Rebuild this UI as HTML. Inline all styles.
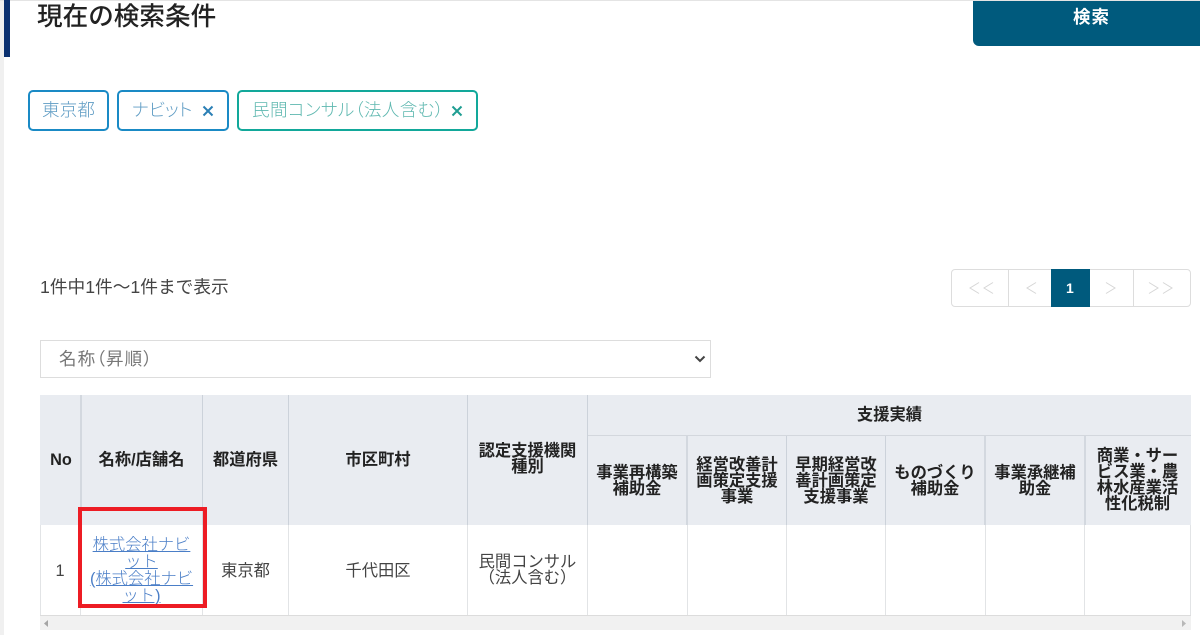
<!DOCTYPE html>
<html lang="ja">
<head>
<meta charset="utf-8">
<style>
html,body{margin:0;padding:0;background:#fff}
body{position:relative;width:1200px;height:635px;overflow:hidden;font-family:"Liberation Sans","Noto Sans CJK JP",sans-serif;color:#333}
.a{position:absolute;box-sizing:border-box}
.t{position:absolute;white-space:nowrap;line-height:1}
.tag{position:absolute;box-sizing:border-box;top:90px;height:41px;border:2px solid #1a8ac5;border-radius:5px;background:#fff}
.tag span{position:absolute;top:8px;white-space:nowrap;font-size:17.6px;line-height:20px;font-weight:300;color:#5f9cc4}
.tag svg{position:absolute;top:13px}
.c{position:absolute;display:flex;align-items:center;justify-content:center;text-align:center;box-sizing:border-box}
.h{font-size:16.3px;line-height:16px;font-weight:700;color:#222}
.d{font-size:16.3px;line-height:16px;color:#444;padding-top:2px}
.v{position:absolute;width:1px}
.p{font-feature-settings:"palt"}
</style>
</head>
<body>
<div class="a" style="left:0;top:0;width:4px;height:635px;background:#f0f0f0"></div>
<div class="a" style="left:0;top:0;width:1200px;height:1px;background:#e4e4e4"></div>
<div class="a" style="left:4px;top:0;width:6px;height:57px;background:#0b3170"></div>
<div class="t" style="left:37px;top:4px;font-size:25.6px;line-height:26px;font-weight:500;color:#222">現在の検索条件</div>

<div class="a" style="left:973px;top:1px;width:227px;height:45px;background:#005a7d;border-bottom-left-radius:6px"></div>
<div class="t" style="left:1073px;top:8px;font-size:17.5px;line-height:18px;font-weight:700;color:#fff;letter-spacing:1px">検索</div>

<div class="tag" style="left:28px;width:81px"><span style="left:12px">東京都</span></div>
<div class="tag" style="left:117px;width:112px"><span class="p" style="left:13px">ナビット</span>
<svg style="left:83px" width="12" height="12" viewBox="0 0 12 12"><path d="M1.5 1.5L10.5 10.5M10.5 1.5L1.5 10.5" stroke="#2b7fb5" stroke-width="2" fill="none"/></svg></div>
<div class="tag" style="left:237px;width:241px;border-color:#12a89a"><span class="p" style="left:13px;color:#5fb8b0;letter-spacing:.35px">民間コンサル（法人含む）</span>
<svg style="left:212px" width="12" height="12" viewBox="0 0 12 12"><path d="M1.5 1.5L10.5 10.5M10.5 1.5L1.5 10.5" stroke="#1f9d92" stroke-width="2" fill="none"/></svg></div>

<div class="t" style="left:40px;top:277px;font-size:17.7px;line-height:20px;color:#444">1件中1件～1件まで表示</div>

<div class="a" style="left:951px;top:269px;width:240px;height:38px;border:1px solid #ddd;border-radius:4px"></div>
<div class="v" style="left:1008px;top:269px;height:38px;background:#ddd"></div>
<div class="a" style="left:1051px;top:269px;width:39px;height:38px;background:#005a7d"></div>
<div class="v" style="left:1133px;top:269px;height:38px;background:#ddd"></div>
<svg class="a" style="left:969px;top:282px" width="25" height="12" viewBox="0 0 25 12"><path d="M10 .5L1 6L10 11.500M24 .5L15 6L24 11.500" stroke="#d6d6d6" stroke-width="1" fill="none"/></svg>
<svg class="a" style="left:1026px;top:282px" width="12" height="12" viewBox="0 0 12 12"><path d="M10 .5L1 6L10 11.500" stroke="#d6d6d6" stroke-width="1" fill="none"/></svg>
<div class="t" style="left:1066px;top:281px;font-size:14px;line-height:14px;color:#fff;font-weight:700">1</div>
<svg class="a" style="left:1105px;top:282px" width="12" height="12" viewBox="0 0 12 12"><path d="M1 .5L10 6L1 11.500" stroke="#d6d6d6" stroke-width="1" fill="none"/></svg>
<svg class="a" style="left:1148px;top:282px" width="25" height="12" viewBox="0 0 25 12"><path d="M1 .5L10 6L1 11.500M15 .5L24 6L15 11.500" stroke="#d6d6d6" stroke-width="1" fill="none"/></svg>

<div class="a" style="left:40px;top:340px;width:671px;height:38px;border:1px solid #ddd;background:#fff"></div>
<div class="t p" style="left:59px;top:349px;font-size:17.5px;line-height:20px;color:#777;letter-spacing:1.1px">名称（昇順）</div>
<svg class="a" style="left:694px;top:355px" width="12" height="8" viewBox="0 0 12 8"><path d="M1.5 1.5L6 6L10.500 1.500" stroke="#444" stroke-width="2" fill="none"/></svg>

<!-- table -->
<div class="a" style="left:40px;top:395px;width:1151px;height:130px;background:#e9ecf1"></div>
<div class="a" style="left:587px;top:435px;width:604px;height:1px;background:#d3d7dd"></div>
<div class="a" style="left:40px;top:525px;width:1px;height:90px;background:#e2e4e6"></div>
<div class="a" style="left:1190px;top:525px;width:1px;height:90px;background:#e2e4e6"></div>
<div class="a" style="left:40px;top:615px;width:1151px;height:1px;background:#dcdcdc"></div>
<div class="a" style="left:40px;top:616px;width:1151px;height:14px;background:#f1f1f1"></div>
<svg class="a" style="left:44px;top:620px" width="5" height="7" viewBox="0 0 5 7"><path d="M4 0V7L0 3.500Z" fill="#a5a5a5"/></svg>
<svg class="a" style="left:1182px;top:620px" width="5" height="7" viewBox="0 0 5 7"><path d="M0 0V7L4 3.500Z" fill="#b8b8b8"/></svg>

<div class="v" style="left:80px;top:395px;height:130px;background:#d3d8df;width:2px"></div>
<div class="v" style="left:202px;top:395px;height:130px;background:#ccd2da"></div>
<div class="v" style="left:288px;top:395px;height:130px;background:#ccd2da"></div>
<div class="v" style="left:467px;top:395px;height:130px;background:#ccd2da"></div>
<div class="v" style="left:587px;top:395px;height:130px;background:#ccd2da"></div>
<div class="v" style="left:686px;top:436px;height:89px;background:#d3d8df;width:2px"></div>
<div class="v" style="left:786px;top:436px;height:89px;background:#ccd2da"></div>
<div class="v" style="left:885px;top:436px;height:89px;background:#ccd2da"></div>
<div class="v" style="left:984px;top:436px;height:89px;background:#d3d8df;width:2px"></div>
<div class="v" style="left:1084px;top:436px;height:89px;background:#d3d8df;width:2px"></div>

<div class="v" style="left:80px;top:525px;height:90px;background:#e2e4e6"></div>
<div class="v" style="left:202px;top:525px;height:90px;background:#e2e4e6"></div>
<div class="v" style="left:288px;top:525px;height:90px;background:#e2e4e6"></div>
<div class="v" style="left:467px;top:525px;height:90px;background:#e2e4e6"></div>
<div class="v" style="left:587px;top:525px;height:90px;background:#e2e4e6"></div>
<div class="v" style="left:687px;top:525px;height:90px;background:#e2e4e6"></div>
<div class="v" style="left:786px;top:525px;height:90px;background:#e2e4e6"></div>
<div class="v" style="left:885px;top:525px;height:90px;background:#e2e4e6"></div>
<div class="v" style="left:985px;top:525px;height:90px;background:#e2e4e6"></div>
<div class="v" style="left:1084px;top:525px;height:90px;background:#e2e4e6"></div>

<div class="c h" style="left:41px;top:395px;width:40px;height:130px">No</div>
<div class="c h" style="left:81px;top:395px;width:121px;height:130px">名称/店舗名</div>
<div class="c h" style="left:203px;top:395px;width:85px;height:130px">都道府県</div>
<div class="c h" style="left:289px;top:395px;width:178px;height:130px">市区町村</div>
<div class="c h" style="left:468px;top:394px;width:119px;height:130px">認定支援機関<br>種別</div>
<div class="c h" style="left:588px;top:395px;width:603px;height:40px">支援実績</div>
<div class="c h" style="left:588px;top:436px;width:98px;height:89px">事業再構築<br>補助金</div>
<div class="c h" style="left:688px;top:436px;width:98px;height:89px">経営改善計<br>画策定支援<br>事業</div>
<div class="c h" style="left:787px;top:436px;width:98px;height:89px">早期経営改<br>善計画策定<br>支援事業</div>
<div class="c h" style="left:886px;top:436px;width:98px;height:89px">ものづくり<br>補助金</div>
<div class="c h" style="left:986px;top:436px;width:98px;height:89px">事業承継補<br>助金</div>
<div class="c h" style="left:1086px;top:435px;width:103px;height:89px">商業・サー<br>ビス業・農<br>林水産業活<br>性化税制</div>

<div class="c d" style="left:40px;top:525px;width:40px;height:90px">1</div>
<div class="c d" style="left:81px;top:526px;width:121px;height:90px;padding-top:0;line-height:17px;color:#4a7ec7;text-decoration:underline;font-weight:300">株式会社ナビ<br>ット<br>(株式会社ナビ<br>ット)</div>
<div class="c d" style="left:203px;top:525px;width:85px;height:90px">東京都</div>
<div class="c d" style="left:289px;top:525px;width:178px;height:90px">千代田区</div>
<div class="c d" style="left:468px;top:524px;width:119px;height:90px">民間コンサル<br>（法人含む）</div>

<div class="a" style="left:78px;top:507px;width:129px;height:101px;border:4px solid #ed1c24"></div>
</body>
</html>
